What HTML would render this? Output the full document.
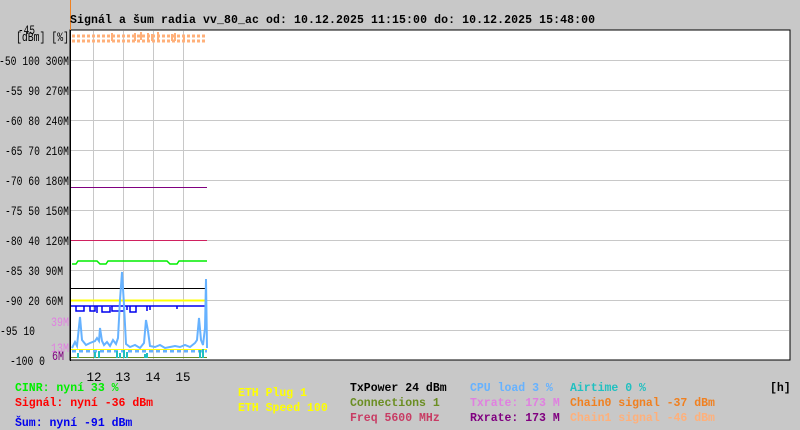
<!DOCTYPE html>
<html><head><meta charset="utf-8"><style>
html,body{margin:0;padding:0;background:#c8c8c8;}
svg{display:block}
text{font-family:"Liberation Mono","DejaVu Sans Mono",monospace;font-size:11.5px;}
.ax text{font-size:12.5px;}
.lg text{font-weight:bold;}
</style></head><body>
<svg width="800" height="430" viewBox="0 0 800 430" xmlns="http://www.w3.org/2000/svg">
<rect width="800" height="430" fill="#c8c8c8"/>
<rect x="70" y="30" width="720" height="330" fill="#fff" stroke="#000" stroke-width="1"/>
<g stroke="#c8c8c8" stroke-width="1">
<line x1="71" y1="60.5" x2="789" y2="60.5"/><line x1="71" y1="90.5" x2="789" y2="90.5"/>
<line x1="71" y1="120.5" x2="789" y2="120.5"/><line x1="71" y1="150.5" x2="789" y2="150.5"/>
<line x1="71" y1="180.5" x2="789" y2="180.5"/><line x1="71" y1="210.5" x2="789" y2="210.5"/>
<line x1="71" y1="240.5" x2="789" y2="240.5"/><line x1="71" y1="270.5" x2="789" y2="270.5"/>
<line x1="71" y1="300.5" x2="789" y2="300.5"/><line x1="71" y1="330.5" x2="789" y2="330.5"/>
<line x1="93.5" y1="31" x2="93.5" y2="359"/><line x1="123.5" y1="31" x2="123.5" y2="359"/>
<line x1="153.5" y1="31" x2="153.5" y2="359"/><line x1="183.5" y1="31" x2="183.5" y2="359"/>
</g>
<path d="M72 36 L207 36 M72 41 L207 41" stroke="#ffb07a" stroke-width="3" stroke-dasharray="3 2"/>
<path d="M112 33v8M135 33v8M141 32v8M148 33v8M152 34v7M158 32v8M172 34v7M175 33v8M184 35v6" stroke="#ffb07a" stroke-width="2"/>
<line x1="70.5" y1="0" x2="70.5" y2="30" stroke="#f08020"/>
<line x1="71" y1="187.5" x2="207" y2="187.5" stroke="#800080"/>
<line x1="71" y1="240.5" x2="207" y2="240.5" stroke="#d02060"/>
<path d="M72 264 L76 264 L78 261 L97 261 L100 264 L106 264 L108 261 L167 261 L170 264 L177 264 L179 261 L207 261" fill="none" stroke="#00ee00" stroke-width="1.5"/>
<line x1="71" y1="288.5" x2="207" y2="288.5" stroke="#000"/>
<line x1="71" y1="300.5" x2="207" y2="300.5" stroke="#ffff00" stroke-width="2"/>
<path d="M71 306 L207 306 M76 306v5h8v-5M90 306v5h5v-5M97 306v7M102 306v6h8v-5M112 306v5h12v-5M127 306v4M130 306v6h6v-6M147 306v5M150 306v4M177 306v3" fill="none" stroke="#0000ee" stroke-width="1.5"/>
<path d="M72 348 L75 342 L77 346 L80 317 L82 340 L86 345 L90 343 L95 341 L97 338 L99 341 L100 328 L102 341 L104 345 L107 342 L110 346 L113 340 L116 344 L118 338 L120 300 L122 272 L124 305 L126 344 L130 347 L135 345 L140 348 L144 343 L146 320 L148 331 L150 346 L155 347 L160 345 L165 348 L170 347 L175 346 L180 347 L185 345 L190 347 L195 343 L197 340 L199 318 L201 340 L203 345 L205 328 L206 279 L207 348" fill="none" stroke="#66b2ff" stroke-width="2"/>
<path d="M72 351 L207 351" stroke="#66b2ff" stroke-width="3" stroke-dasharray="4 3"/>
<line x1="71" y1="349.5" x2="207" y2="349.5" stroke="#ffff00"/>
<line x1="71" y1="357.5" x2="207" y2="357.5" stroke="#6b8e23"/>
<path d="M78 353v5M95 352v6M99 351v7M117 351v7M120 353v5M124 350v8M127 352v6M145 354v4M147 353v5M200 350v8M203 349v9" stroke="#20c0c0" stroke-width="2"/>
<line x1="70.5" y1="30" x2="70.5" y2="361" stroke="#000"/>
<text x="70" y="23" textLength="525" font-weight="bold">Signál a šum radia vv_80_ac od: 10.12.2025 11:15:00 do: 10.12.2025 15:48:00</text>
<g text-anchor="end" class="ax">
<text x="35" y="34" textLength="17" lengthAdjust="spacingAndGlyphs">-45</text>
<text x="69" y="41" textLength="53" lengthAdjust="spacingAndGlyphs">[dBm] [%]</text>
<text x="69" y="65" textLength="70" lengthAdjust="spacingAndGlyphs">-50 100 300M</text>
<text x="69" y="95" textLength="64" lengthAdjust="spacingAndGlyphs">-55 90 270M</text>
<text x="69" y="125" textLength="64" lengthAdjust="spacingAndGlyphs">-60 80 240M</text>
<text x="69" y="155" textLength="64" lengthAdjust="spacingAndGlyphs">-65 70 210M</text>
<text x="69" y="185" textLength="64" lengthAdjust="spacingAndGlyphs">-70 60 180M</text>
<text x="69" y="215" textLength="64" lengthAdjust="spacingAndGlyphs">-75 50 150M</text>
<text x="69" y="245" textLength="64" lengthAdjust="spacingAndGlyphs">-80 40 120M</text>
<text x="63" y="275" textLength="58" lengthAdjust="spacingAndGlyphs">-85 30 90M</text>
<text x="63" y="305" textLength="58" lengthAdjust="spacingAndGlyphs">-90 20 60M</text>
<text x="35" y="335" textLength="35" lengthAdjust="spacingAndGlyphs">-95 10</text>
<text x="45" y="365" textLength="35" lengthAdjust="spacingAndGlyphs">-100 0</text>
<text x="69" y="326" fill="#e080e0" textLength="18" lengthAdjust="spacingAndGlyphs">39M</text>
<text x="69" y="352" fill="#e080e0" textLength="18" lengthAdjust="spacingAndGlyphs">13M</text>
<text x="64" y="360" fill="#800080" textLength="12" lengthAdjust="spacingAndGlyphs">6M</text>
</g>
<g text-anchor="middle" class="ax">
<text x="94" y="381">12</text><text x="123" y="381">13</text><text x="153" y="381">14</text><text x="183" y="381">15</text>
</g>
<g class="lg">
<text x="15" y="391" fill="#00ee00">CINR: nyní 33 %</text>
<text x="15" y="406" fill="#ff0000">Signál: nyní -36 dBm</text>
<text x="15" y="426" fill="#0000ee">Šum: nyní -91 dBm</text>
<text x="238" y="396" fill="#ffff00">ETH Plug 1</text>
<text x="238" y="411" fill="#ffff00">ETH Speed 100</text>
<text x="350" y="391" fill="#000">TxPower 24 dBm</text>
<text x="350" y="406" fill="#6b8e23">Connections 1</text>
<text x="350" y="421" fill="#c83c64">Freq 5600 MHz</text>
<text x="470" y="391" fill="#66b2ff">CPU load 3 %</text>
<text x="470" y="406" fill="#e080e0">Txrate: 173 M</text>
<text x="470" y="421" fill="#800080">Rxrate: 173 M</text>
<text x="570" y="391" fill="#20c0c0">Airtime 0 %</text>
<text x="570" y="406" fill="#f08020">Chain0 signal -37 dBm</text>
<text x="570" y="421" fill="#ffb07a">Chain1 signal -46 dBm</text>
<text x="770" y="391" fill="#000" font-weight="normal">[h]</text>
</g>
</svg>
</body></html>
